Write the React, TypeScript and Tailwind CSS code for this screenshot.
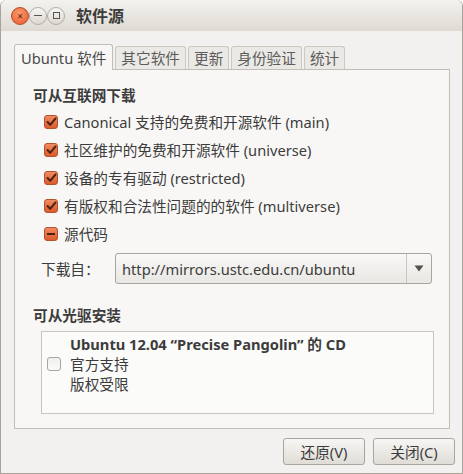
import { FC, ReactNode } from "react";

const CheckOn: FC = () => (
    <span className="flex h-[14px] w-[14px] items-center justify-center rounded-[3px] border border-[#b5512b] bg-gradient-to-b from-[#f08a5f] to-[#db5b2c]">
        <svg width="11" height="10" viewBox="0 0 11 10">
            <path d="M1.5 5 L4.2 7.8 L9.5 1.5" fill="none" stroke="#4b2414" strokeWidth="2" strokeLinecap="round" strokeLinejoin="round" />
        </svg>
    </span>
)

const CheckMixed: FC = () => (
    <span className="flex h-[14px] w-[14px] items-center justify-center rounded-[3px] border border-[#b5512b] bg-gradient-to-b from-[#f08a5f] to-[#db5b2c]">
        <span className="h-[2px] w-[8px] bg-[#4b2414]" />
    </span>
)

const CheckOff: FC = () => (
    <span className="block h-[14px] w-[14px] rounded-[3px] border border-[#a9a49c] bg-gradient-to-b from-[#f0efed] to-[#fbfbfa]" />
)

const Fila: FC<{ box: ReactNode, children: ReactNode }> = ({ box, children }) => (
    <div className="flex h-[28px] items-center gap-[6px] pl-[29px]">
        {box}
        <span>{children}</span>
    </div>
)

const tabs = ["其它软件", "更新", "身份验证", "统计"]

export default function App() {
    return (
        <div className="h-[474px] w-[463px] overflow-hidden font-['Noto_Sans','Noto_Sans_CJK_SC',sans-serif] text-[14.67px] text-[#3c3c3c]">
            <div className="flex h-full w-full flex-col rounded-t-[6px] border-x border-b border-[#a8a39b] bg-[#f2f1f0]">
                {/* barra de titulo */}
                <div className="flex h-[31px] shrink-0 items-center rounded-t-[6px] bg-gradient-to-b from-[#f3f2ef] to-[#dedad3] pl-[10px]">
                    <span className="flex h-[18px] w-[18px] items-center justify-center rounded-full border border-[#b44a1e] bg-[radial-gradient(circle_at_45%_35%,#fa9a6e,#e8582a)] text-[10px] leading-none text-[#5a200c]">×</span>
                    <span className="flex h-[18px] w-[18px] items-center justify-center rounded-full border border-[#b3aea6] bg-gradient-to-b from-[#f7f6f4] to-[#dcd8d1]">
                        <span className="h-[1px] w-[8px] bg-[#5a5650]" />
                    </span>
                    <span className="flex h-[18px] w-[18px] items-center justify-center rounded-full border border-[#b3aea6] bg-gradient-to-b from-[#f7f6f4] to-[#dcd8d1]">
                        <span className="h-[7px] w-[7px] border border-[#5a5650]" />
                    </span>
                    <span className="ml-[11px] text-[16px] font-bold text-[#3c3c3c]">软件源</span>
                </div>

                {/* pestañas */}
                <div className="ml-[13px] mt-[13px] flex h-[25px] items-end">
                    <div className="relative z-10 -mb-px flex h-[26px] items-center rounded-t-[3px] border border-b-0 border-[#c2bdb5] bg-[#f8f7f6] px-[6px] text-[#4a4a4a]">
                        Ubuntu 软件
                    </div>
                    {tabs.map((t) => (
                        <div key={t} className="ml-[2px] flex h-[23px] items-center rounded-t-[3px] border border-b-0 border-[#cdc8c0] bg-[#ebe9e5] px-[5px] text-[#5c5c5c]">
                            {t}
                        </div>
                    ))}
                </div>

                {/* panel */}
                <div className="ml-[13px] flex h-[360px] w-[436px] flex-col border border-[#c2bdb5] bg-[#f8f7f6]">
                    <div className="mt-[15px] flex h-[20px] items-center pl-[18px] font-bold">可从互联网下载</div>
                    <div className="mt-[3px]">
                        <Fila box={<CheckOn />}>Canonical 支持的免费和开源软件 (main)</Fila>
                        <Fila box={<CheckOn />}>社区维护的免费和开源软件 (universe)</Fila>
                        <Fila box={<CheckOn />}>设备的专有驱动 (restricted)</Fila>
                        <Fila box={<CheckOn />}>有版权和合法性问题的的软件 (multiverse)</Fila>
                        <Fila box={<CheckMixed />}>源代码</Fila>
                    </div>
                    <div className="mt-[5px] flex h-[31px] items-center pl-[26px]">
                        <span className="w-[74px]">下载自：</span>
                        <div className="flex h-[31px] w-[317px] items-center rounded-[3px] border border-[#a9a49c] bg-gradient-to-b from-[#f9f8f7] to-[#e9e7e3]">
                            <span className="flex-1 pl-[6px]">http://mirrors.ustc.edu.cn/ubuntu</span>
                            <span className="h-[29px] w-px bg-[#c9c5be]" />
                            <span className="flex w-[24px] justify-center">
                                <svg width="10" height="7" viewBox="0 0 10 7">
                                    <path d="M0.5 0.5 L9.5 0.5 L5 6.5 Z" fill="#55524d" />
                                </svg>
                            </span>
                        </div>
                    </div>
                    <div className="mt-[21px] flex h-[20px] items-center pl-[18px] font-bold">可从光驱安装</div>
                    <div className="ml-[26px] mt-[6px] flex h-[83px] w-[393px] items-center border border-[#c9c5bd] bg-[#fbfbfa] pb-[18px] pl-[5px]">
                        <CheckOff />
                        <div className="ml-[9px] flex flex-col leading-[20px]">
                            <span className="font-bold">Ubuntu 12.04 “Precise Pangolin” 的 CD</span>
                            <span>官方支持</span>
                            <span>版权受限</span>
                        </div>
                    </div>
                </div>

                {/* botones */}
                <div className="mr-[7px] mt-[9px] flex justify-end gap-[8px]">
                    <button className="h-[27px] w-[82px] rounded-[3px] border border-[#a9a49c] bg-gradient-to-b from-[#f7f6f4] to-[#e0ddd7] text-[#3c3c3c]">还原(V)</button>
                    <button className="h-[27px] w-[82px] rounded-[3px] border border-[#a9a49c] bg-gradient-to-b from-[#f7f6f4] to-[#e0ddd7] text-[#3c3c3c]">关闭(C)</button>
                </div>
            </div>
        </div>
    )
}
